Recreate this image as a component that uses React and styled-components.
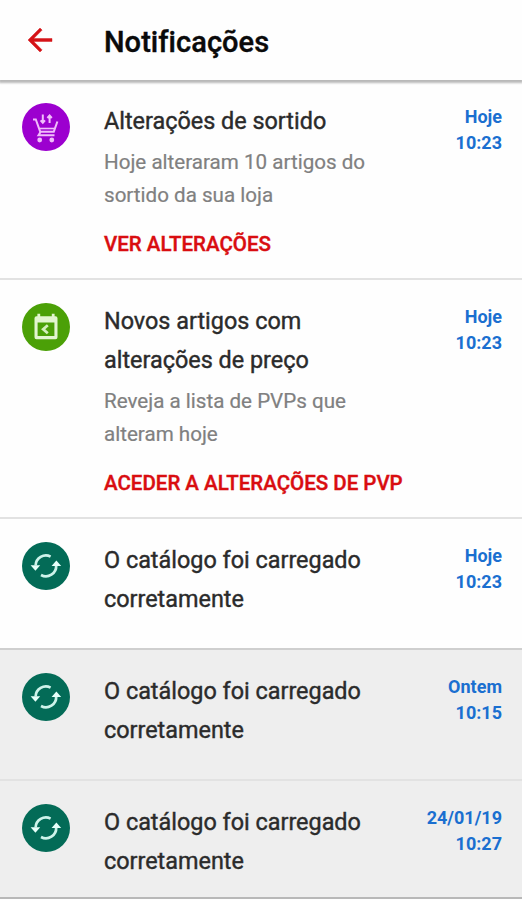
import React from 'react';
import styled, { createGlobalStyle } from 'styled-components';

const GlobalStyle = createGlobalStyle`
  * {
    box-sizing: border-box;
  }

  body {
    margin: 0;
    background-color: #fefefe;
    font-family: Roboto, 'Liberation Sans', sans-serif;
  }
`;

const NOTIFICATIONS = [
  {
    id: 1,
    type: 'assortment',
    title: ['Alterações de sortido'],
    description: ['Hoje alteraram 10 artigos do', 'sortido da sua loja'],
    action: 'VER ALTERAÇÕES',
    day: 'Hoje',
    time: '10:23',
  },
  {
    id: 2,
    type: 'price',
    title: ['Novos artigos com', 'alterações de preço'],
    description: ['Reveja a lista de PVPs que', 'alteram hoje'],
    action: 'ACEDER A ALTERAÇÕES DE PVP',
    day: 'Hoje',
    time: '10:23',
  },
  {
    id: 3,
    type: 'catalog',
    title: ['O catálogo foi carregado', 'corretamente'],
    day: 'Hoje',
    time: '10:23',
    divider: '#cfcfcf',
  },
  {
    id: 4,
    type: 'catalog',
    title: ['O catálogo foi carregado', 'corretamente'],
    day: 'Ontem',
    time: '10:15',
    read: true,
  },
  {
    id: 5,
    type: 'catalog',
    title: ['O catálogo foi carregado', 'corretamente'],
    day: '24/01/19',
    time: '10:27',
    read: true,
    divider: '#b8b8b8',
  },
];

const COLORS = {
  assortment: '#9c00cf',
  price: '#4ba007',
  catalog: '#036b57',
};

const BackIcon = () => (
  <svg width="36" height="36" viewBox="0 0 24 24" fill="#d51317" stroke="#d51317" strokeWidth="0.3">
    <path d="M20 11H7.83l5.59-5.59L12 4l-8 8 8 8 1.41-1.41L7.83 13H20v-2z" />
  </svg>
);

const CartIcon = () => (
  <svg width="48" height="48" viewBox="0 0 48 48" fill="none" stroke="#f0bdfa" strokeWidth="2">
    <path d="M11 16.5h2.8l4.4 12.2h13.6l3.6-10.2" />
    <path d="M18.5 29l-2 3.2h16" />
    <path d="M17.5 25.5h15" strokeWidth="1.6" />
    <path d="M20.8 11.5v8M18.6 17.4l2.2 2.4 2.2-2.4" />
    <path d="M27.6 20v-7M25.4 15l2.2-2.4 2.2 2.4" />
    <circle cx="17.7" cy="37" r="2.4" fill="#f0bdfa" stroke="none" />
    <circle cx="29.8" cy="37" r="2.4" fill="#f0bdfa" stroke="none" />
  </svg>
);

const CalendarIcon = () => (
  <svg width="48" height="48" viewBox="0 0 48 48" fill="none">
    <path
      d="M14.5 13.2h19a2 2 0 0 1 2 2v19a2 2 0 0 1-2 2h-19a2 2 0 0 1-2-2v-19a2 2 0 0 1 2-2zM15.6 19.5v13.4h16.8V19.5z"
      fill="#e2f5d0"
      fillRule="evenodd"
    />
    <path d="M16.8 10.8v4M31.2 10.8v4" stroke="#e2f5d0" strokeWidth="2.8" />
    <path d="M25.8 22.2l-4.6 4 4.6 4" stroke="#d5efbd" strokeWidth="2.8" />
  </svg>
);

const SyncIcon = () => (
  <svg width="48" height="48" viewBox="0 0 48 48" fill="none" stroke="#cdf3ea" strokeWidth="2.7">
    <path d="M13.6 23.5A10.3 10.3 0 0 1 28.6 14.6" />
    <path d="M34.2 23.5A10.3 10.3 0 0 1 19 33" />
    <path d="M8.6 23.2h9.6l-4.8 5.6z" fill="#e6fffa" stroke="none" />
    <path d="M29.6 24H39.2l-4.8-5.6z" fill="#e6fffa" stroke="none" />
  </svg>
);

const ICONS = {
  assortment: CartIcon,
  price: CalendarIcon,
  catalog: SyncIcon,
};

const Notification = ({ item }) => {
  const Icon = ICONS[item.type];

  return (
    <Row $read={item.read} $divider={item.divider} $compact={Boolean(item.action)}>
      <Badge $type={item.type}>
        <Icon />
      </Badge>
      <Content>
        <Title>
          {item.title.map((line) => (
            <Line key={line}>{line}</Line>
          ))}
        </Title>
        {item.description && (
          <Description>
            {item.description.map((line) => (
              <Line key={line}>{line}</Line>
            ))}
          </Description>
        )}
        {item.action && <Action>{item.action}</Action>}
      </Content>
      <DateTime>
        <Line>{item.day}</Line>
        <Line>{item.time}</Line>
      </DateTime>
    </Row>
  );
};

const App = () => {
  return (
    <Screen>
      <GlobalStyle />
      <Header>
        <BackButton aria-label="Voltar">
          <BackIcon />
        </BackButton>
        <Heading>Notificações</Heading>
      </Header>
      <List>
        {NOTIFICATIONS.map((item) => (
          <Notification key={item.id} item={item} />
        ))}
      </List>
    </Screen>
  );
};

const Screen = styled.div`
  width: 522px;
  height: 900px;
  overflow: hidden;
`;

const Header = styled.header`
  display: flex;
  align-items: center;
  height: 80px;
  padding: 0 22px;
  box-shadow: 0 2px 2px 1px rgba(0, 0, 0, 0.27);
`;

const BackButton = styled.button`
  width: 36px;
  height: 36px;
  margin-right: 46px;
  padding: 0;
  border: 0;
  background: none;

  svg {
    display: block;
  }
`;

const Heading = styled.h1`
  margin: 4px 0 0;
  color: #0a0a0a;
  font-size: 29px;
  font-weight: 500;
  letter-spacing: 0.05px;
  -webkit-text-stroke: 0.4px #0a0a0a;
`;

const List = styled.ul`
  margin: 0;
  padding: 0;
  list-style: none;
`;

const Row = styled.li`
  display: flex;
  align-items: flex-start;
  padding: 22px 20px ${(props) => (props.$compact ? '22px' : '28px')} 22px;
  background-color: ${(props) => (props.$read ? '#eeeeee' : 'transparent')};
  border-bottom: 2px solid ${(props) => props.$divider || '#e2e2e2'};

  &:last-child {
    padding-bottom: 15px;
  }
`;

const Badge = styled.div`
  flex: none;
  width: 48px;
  height: 48px;
  margin: 1px 34px 0 0;
  border-radius: 50%;
  background-color: ${(props) => COLORS[props.$type]};
`;

const Content = styled.div`
  flex: 1;
  white-space: nowrap;
`;

const Line = styled.span`
  display: block;
`;

const Title = styled.h2`
  margin: 0;
  color: #2b2b2b;
  font-size: 23.4px;
  font-weight: 400;
  line-height: 39.5px;
  -webkit-text-stroke: 0.4px #2b2b2b;
`;

const Description = styled.p`
  margin: 4px 0 0;
  color: #808080;
  font-size: 20.6px;
  line-height: 33px;
  -webkit-text-stroke: 0.2px #808080;
`;

const Action = styled.a`
  display: block;
  margin-top: 20px;
  color: #d90d10;
  font-size: 20.5px;
  font-weight: 500;
  line-height: 24px;
  -webkit-text-stroke: 0.4px #d90d10;
`;

const DateTime = styled.div`
  margin-top: 2px;
  color: #1a6fd0;
  font-size: 18px;
  font-weight: 700;
  line-height: 26px;
  text-align: right;
`;

export default App;
